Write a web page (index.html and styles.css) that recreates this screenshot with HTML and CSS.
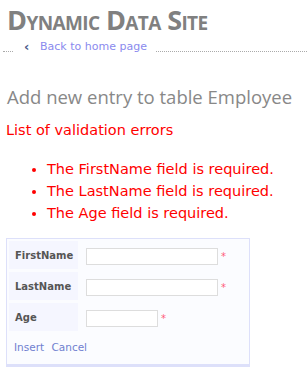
FILE: index.html
```html
<!DOCTYPE html>
<html lang="en">
<head>
  <meta charset="UTF-8" />
  <title>Dynamic Data Site</title>
  <link rel="stylesheet" href="styles.css">
</head>
<body>
  <h1 class="site-title">Dynamic Data Site</h1>
  <div class="nav">
    <span class="dots short"></span>
    <span class="chev">&lsaquo;</span>
    <a href="#" class="home">Back to home page</a>
    <span class="dots long"></span>
  </div>

  <h2 class="page-title">Add new entry to table Employee</h2>

  <div class="errors">
    <div class="errors-head">List of validation errors</div>
    <ul>
      <li>The FirstName field is required.</li>
      <li>The LastName field is required.</li>
      <li>The Age field is required.</li>
    </ul>
  </div>

  <div class="form-box">
    <table class="details">
      <tr>
        <th>FirstName</th>
        <td><input type="text" class="wide"><span class="req">*</span></td>
      </tr>
      <tr>
        <th>LastName</th>
        <td><input type="text" class="wide"><span class="req">*</span></td>
      </tr>
      <tr>
        <th>Age</th>
        <td><input type="text" class="narrow"><span class="req">*</span></td>
      </tr>
    </table>
    <div class="actions">
      <a href="#">Insert</a>
      <a href="#">Cancel</a>
    </div>
  </div>
</body>
</html>
```

FILE: styles.css
```css
body { margin: 0; padding: 0 6px; font-family: "DejaVu Sans", sans-serif; background: #fff; }
a { text-decoration: none; }

.site-title { margin: 4px 0 0 1px; font-family: "Open Sans", sans-serif; font-size: 27px; font-variant: small-caps; font-weight: bold; color: #808080; letter-spacing: -0.6px; line-height: 32px; }

.nav { display: flex; align-items: flex-end; margin: 3px -6px 0 -3px; height: 16px; font-size: 11px; }
.nav .dots { border-bottom: 1px dotted #aaa; height: 0; margin-bottom: 3px; }
.nav .dots.short { width: 10px; }
.nav .dots.long { flex: 1; margin-left: 9px; }
.nav .chev { margin-left: 11px; width: 16px; color: #4a5a8a; font-weight: bold; font-size: 13px; line-height: 16px; }
.nav .home { color: #8a8aee; line-height: 16px; }

.page-title { margin: 31px 0 0 1px; font-family: "Open Sans", sans-serif; font-size: 18.5px; font-weight: normal; color: #888; line-height: 22px; }

.errors { color: #ff0000; }
.errors-head { margin-top: 12px; font-size: 14.5px; line-height: 20px; }
.errors ul { margin: 18px 0 0; padding-left: 41px; font-size: 14.5px; line-height: 22px; }

.form-box { margin-top: 14px; width: 238px; border: 1px solid #dde0fa; border-bottom: 3px solid #dde0fa; background: #fbfcff; padding: 2px 2px 11px; }
.details { border-collapse: separate; border-spacing: 0 3px; margin-top: -3px; }
.details th { width: 63px; height: 28px; padding: 0 0 0 6px; background: #f5f6ff; color: #555; font-size: 10px; text-align: left; }
.details td { padding: 0 0 0 8px; white-space: nowrap; }
.details input { height: 15px; border: 1px solid #ddd; padding: 0; background: #fff; vertical-align: middle; }
.details input.wide { width: 130px; }
.details input.narrow { width: 70px; }
.req { color: #ff5a7a; font-size: 10px; margin-left: 3px; vertical-align: middle; }

.actions { padding: 7px 0 0 5px; font-size: 10.5px; }
.actions a { color: #7080d0; margin-right: 4px; }
```
